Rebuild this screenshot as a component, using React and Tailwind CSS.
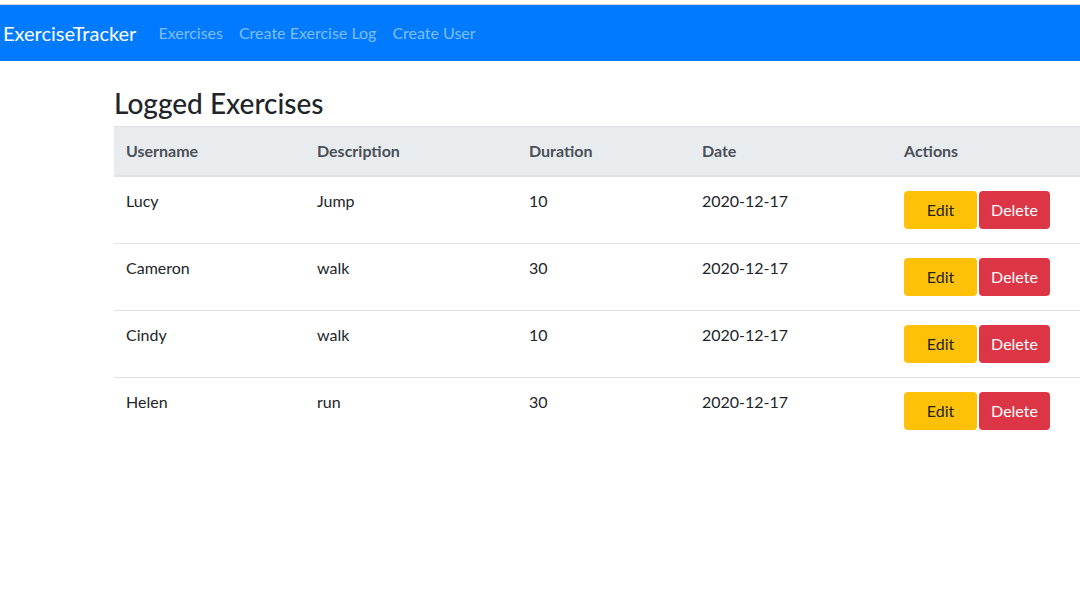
import React from 'react';

const exercises = [
  { username: 'Lucy', description: 'Jump', duration: 10, date: '2020-12-17' },
  { username: 'Cameron', description: 'walk', duration: 30, date: '2020-12-17' },
  { username: 'Cindy', description: 'walk', duration: 10, date: '2020-12-17' },
  { username: 'Helen', description: 'run', duration: 30, date: '2020-12-17' },
];

const Navbar = () => (
  <nav className="flex items-center h-[56px] bg-[#007bff] pl-[3px]">
    <a className="text-white text-[20px] leading-[30px] mr-[14px]">ExerciseTracker</a>
    <ul className="flex">
      <li><a className="block px-[8px] py-[8px] text-[16px] leading-[24px] text-[#80bdff]">Exercises</a></li>
      <li><a className="block px-[8px] py-[8px] text-[16px] leading-[24px] text-[#80bdff]">Create Exercise Log</a></li>
      <li><a className="block px-[8px] py-[8px] text-[16px] leading-[24px] text-[#80bdff]">Create User</a></li>
    </ul>
  </nav>
);

const Row = ({ ex }) => (
  <tr className="border-t border-[#dee2e6]">
    <td className="px-[12px] py-[12px] align-top">{ex.username}</td>
    <td className="px-[12px] py-[12px] align-top">{ex.description}</td>
    <td className="px-[12px] py-[12px] align-top">{ex.duration}</td>
    <td className="px-[12px] py-[12px] align-top">{ex.date}</td>
    <td className="px-[12px] py-[12px] align-top">
      <div className="flex gap-[2px] my-[2px]">
        <button className="w-[73px] h-[38px] rounded-[4px] bg-[#ffc107] text-[#212529]">Edit</button>
        <button className="w-[71px] h-[38px] rounded-[4px] bg-[#dc3545] text-white">Delete</button>
      </div>
    </td>
  </tr>
);

export default function App() {
  return (
    <div className="min-h-[607px] bg-white text-[#212529] text-[16px] leading-[24px] font-['Lato',sans-serif] overflow-hidden">
      <div className="h-[5px] border-b border-[#d4d4d4]" />
      <Navbar />
      <div className="pl-[114px] pt-[26px]">
        <h3 className="text-[28px] leading-[33.6px] font-medium mb-[5px]">Logged Exercises</h3>
        <table className="w-[1000px] border-collapse text-left">
          <thead>
            <tr className="bg-[#e9ecef] text-[#495057] border-t border-[#dee2e6] border-b-2">
              <th className="w-[191px] px-[12px] py-[12px] font-bold">Username</th>
              <th className="w-[212px] px-[12px] py-[12px] font-bold">Description</th>
              <th className="w-[173px] px-[12px] py-[12px] font-bold">Duration</th>
              <th className="w-[202px] px-[12px] py-[12px] font-bold">Date</th>
              <th className="px-[12px] py-[12px] font-bold">Actions</th>
            </tr>
          </thead>
          <tbody>
            {exercises.map((ex, i) => <Row key={i} ex={ex} />)}
          </tbody>
        </table>
      </div>
    </div>
  );
}
